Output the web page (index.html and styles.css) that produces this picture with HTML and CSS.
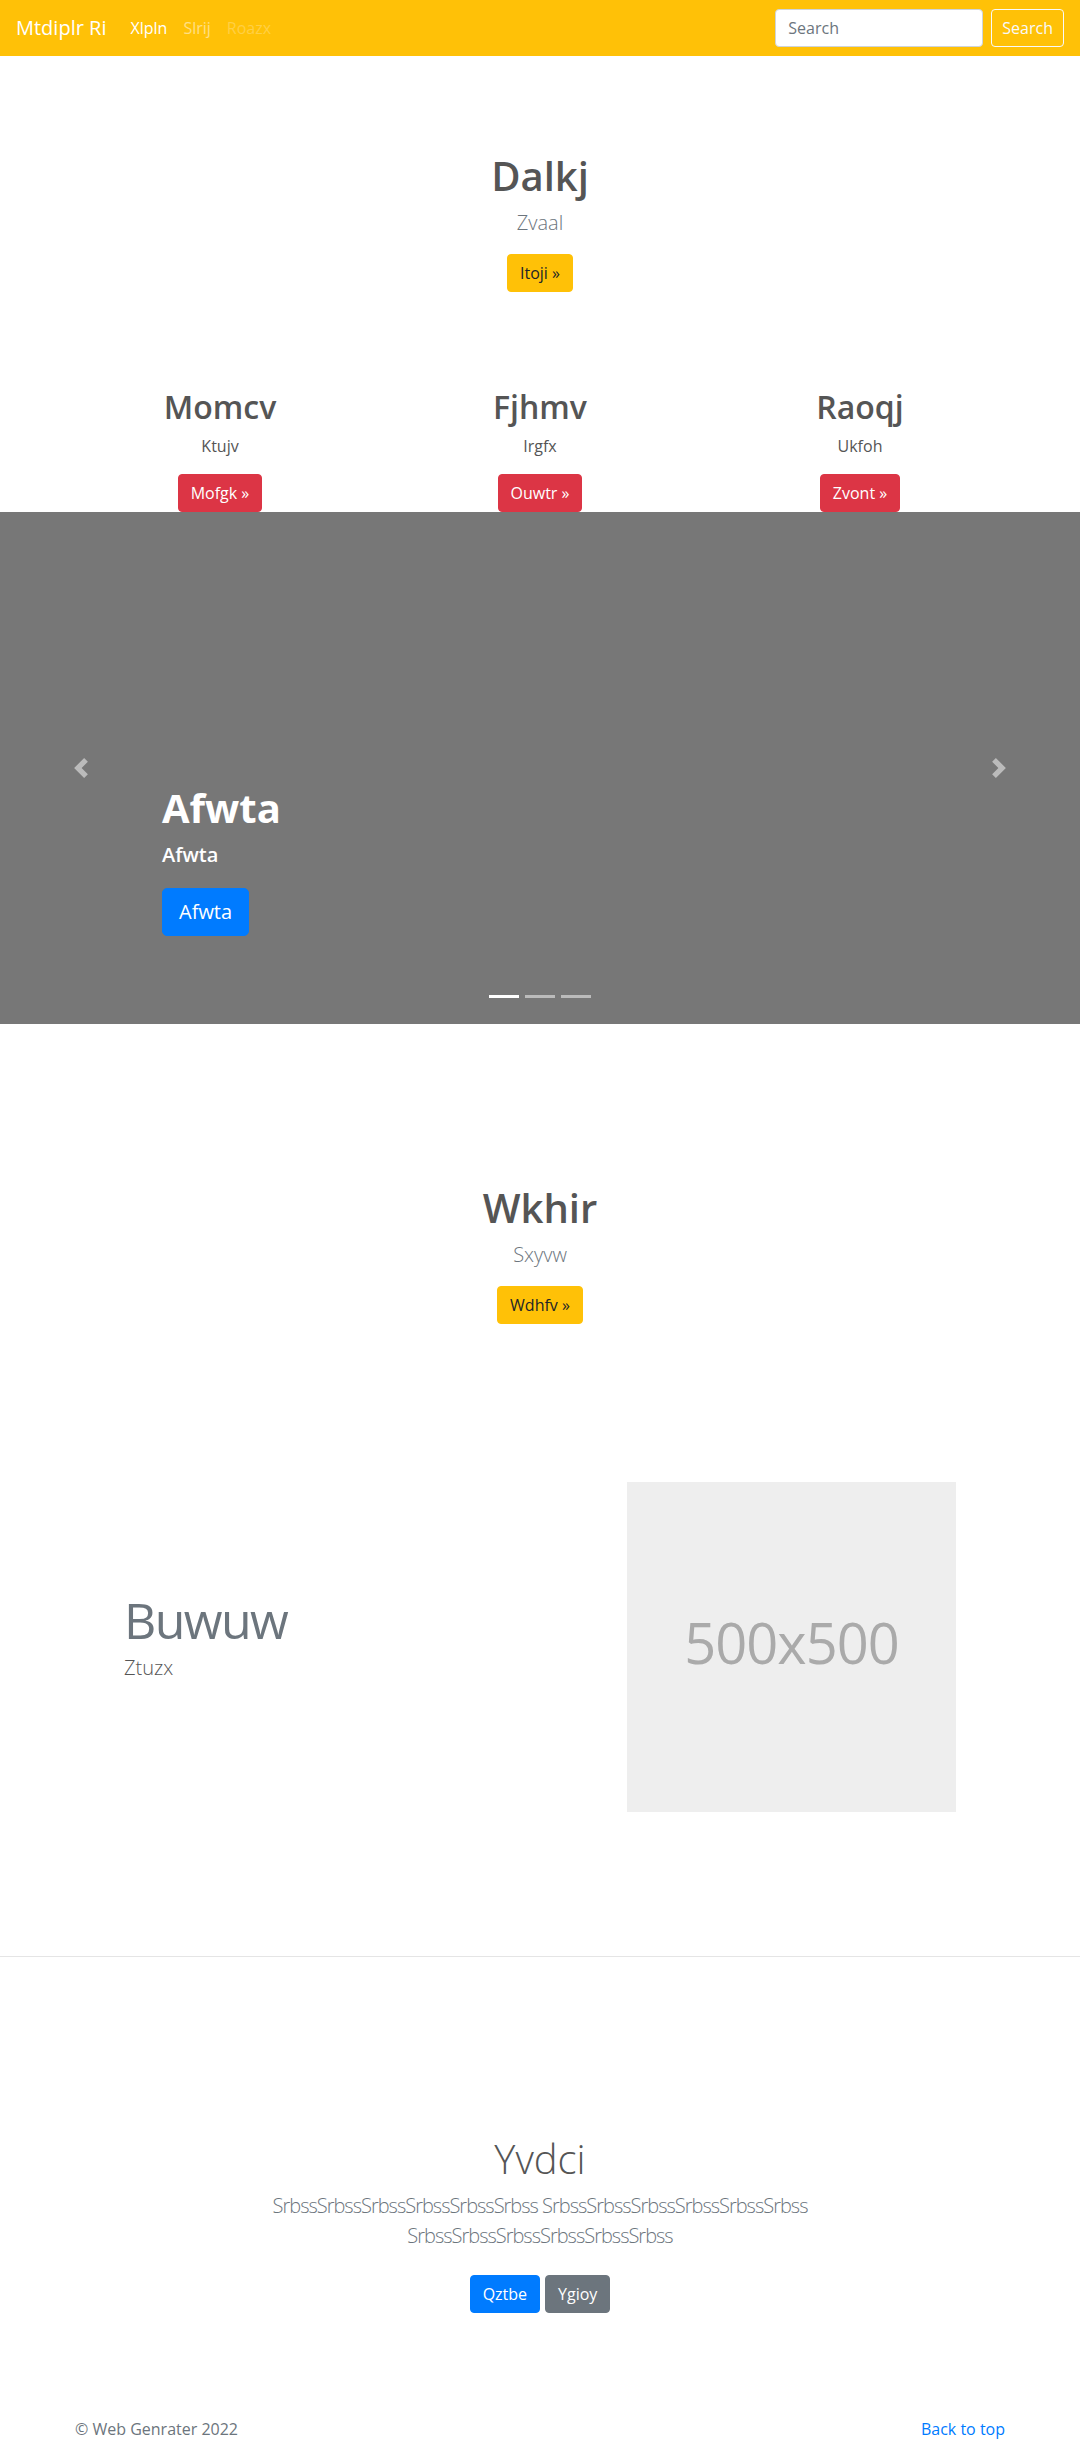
FILE: index.html
```html
<!DOCTYPE html>
<html lang="en">
<head>
<meta charset="utf-8">
<title>Mtdiplr Ri</title>
<link rel="stylesheet" href="styles.css">
</head>
<body>
<header class="navbar">
  <a class="brand" href="#">Mtdiplr Ri</a>
  <ul class="nav">
    <li><a class="nav-link active" href="#">Xlpln</a></li>
    <li><a class="nav-link" href="#">Slrij</a></li>
    <li><a class="nav-link disabled" href="#">Roazx</a></li>
  </ul>
  <form class="search">
    <input class="search-input" type="text" placeholder="Search">
    <button class="btn btn-outline-light" type="button">Search</button>
  </form>
</header>

<main>
  <section class="hero hero-first">
    <h1 class="hero-title">Dalkj</h1>
    <p class="lead muted">Zvaal</p>
    <p class="actions"><a class="btn btn-warning" href="#">Itoji »</a></p>
  </section>

  <section class="columns">
    <div class="col">
      <h2 class="col-title">Momcv</h2>
      <p class="col-text">Ktujv</p>
      <p class="actions"><a class="btn btn-danger" href="#">Mofgk »</a></p>
    </div>
    <div class="col">
      <h2 class="col-title">Fjhmv</h2>
      <p class="col-text">Irgfx</p>
      <p class="actions"><a class="btn btn-danger" href="#">Ouwtr »</a></p>
    </div>
    <div class="col">
      <h2 class="col-title">Raoqj</h2>
      <p class="col-text">Ukfoh</p>
      <p class="actions"><a class="btn btn-danger" href="#">Zvont »</a></p>
    </div>
  </section>

  <div class="carousel">
    <a class="carousel-control prev" href="#">
      <svg class="control-icon" viewBox="0 0 8 8"><path d="M5.25 0l-4 4 4 4 1.5-1.5L4.25 4l2.5-2.5L5.25 0z"/></svg>
    </a>
    <div class="carousel-caption">
      <h1 class="caption-title">Afwta</h1>
      <p class="caption-text">Afwta</p>
      <a class="btn btn-primary btn-lg" href="#">Afwta</a>
    </div>
    <a class="carousel-control next" href="#">
      <svg class="control-icon" viewBox="0 0 8 8"><path d="M2.75 0l-1.5 1.5L3.75 4l-2.5 2.5L2.75 8l4-4-4-4z"/></svg>
    </a>
    <ol class="indicators">
      <li class="active"></li>
      <li></li>
      <li></li>
    </ol>
  </div>

  <section class="hero hero-second">
    <h1 class="hero-title">Wkhir</h1>
    <p class="lead muted">Sxyvw</p>
    <p class="actions"><a class="btn btn-warning" href="#">Wdhfv »</a></p>
  </section>

  <section class="featurette">
    <div class="feat-text">
      <h2 class="feat-heading">Buwuw</h2>
      <p class="lead feat-lead">Ztuzx</p>
    </div>
    <div class="feat-media">
      <svg class="placeholder" role="img" aria-label="500x500">
        <rect width="100%" height="100%" fill="#eee"/>
        <text x="50%" y="50%" dy=".3em" text-anchor="middle" fill="#aaa">500x500</text>
      </svg>
    </div>
  </section>

  <section class="album">
    <div class="album-inner">
      <h1 class="album-title">Yvdci</h1>
      <p class="lead muted album-lead">SrbssSrbssSrbssSrbssSrbssSrbss SrbssSrbssSrbssSrbssSrbssSrbss SrbssSrbssSrbssSrbssSrbssSrbss</p>
      <p class="album-actions">
        <a class="btn btn-primary" href="#">Qztbe</a>
        <a class="btn btn-secondary" href="#">Ygioy</a>
      </p>
    </div>
  </section>
</main>

<footer class="footer">
  <p class="copy">© Web Genrater 2022</p>
  <p class="top-link"><a href="#">Back to top</a></p>
</footer>
</body>
</html>
```
FILE: styles.css
```css
* { box-sizing: border-box; }

html, body {
  margin: 0;
  padding: 0;
}

body {
  font-family: "Open Sans", "Noto Sans", "Liberation Sans", sans-serif;
  font-size: 16px;
  line-height: 1.5;
  color: #555;
  background: #fff;
}

a { text-decoration: none; }

/* navbar */
.navbar {
  display: flex;
  align-items: center;
  height: 56px;
  padding: 8px 16px;
  background: #ffc107;
}
.brand {
  font-size: 20px;
  font-weight: 400;
  line-height: 30px;
  padding: 5px 0;
  margin-right: 16px;
  color: #fff;
}
.nav {
  display: flex;
  list-style: none;
  margin: 0;
  padding: 0;
}
.nav-link {
  display: block;
  padding: 8px;
  line-height: 24px;
  color: rgba(255,255,255,.5);
}
.nav-link.active { color: #fff; }
.nav-link.disabled { color: rgba(255,255,255,.25); }

.search {
  margin-left: auto;
  display: flex;
  align-items: center;
}
.search-input {
  width: 208px;
  height: 38px;
  margin-right: 8px;
  padding: 6px 12px;
  font: inherit;
  font-size: 16px;
  color: #495057;
  background: #fff;
  border: 1px solid #ced4da;
  border-radius: 4px;
}
.search-input::placeholder { color: #6c757d; }

/* buttons */
.btn {
  display: inline-block;
  font-family: inherit;
  font-size: 16px;
  line-height: 24px;
  padding: 6px 12px;
  border: 1px solid transparent;
  border-radius: 4px;
  cursor: pointer;
  vertical-align: middle;
}
.btn-outline-light {
  color: #f8f9fa;
  background: transparent;
  border-color: #f8f9fa;
  padding: 6px 10px;
}
.btn-warning { color: #212529; background: #ffc107; border-color: #ffc107; }
.btn-danger { color: #fff; background: #dc3545; border-color: #dc3545; }
.btn-primary { color: #fff; background: #007bff; border-color: #007bff; }
.btn-secondary { color: #fff; background: #6c757d; border-color: #6c757d; }
.btn-lg {
  font-size: 20px;
  line-height: 30px;
  padding: 8px 16px;
  border-radius: 5px;
}

/* hero */
.hero {
  text-align: center;
}
.hero-first { padding-top: 96px; }
.hero-second { padding-top: 160px; }
.hero-title {
  margin: 0 0 8px;
  font-size: 40px;
  font-weight: 600;
  line-height: 1.2;
  color: #555;
}
.lead {
  font-size: 20px;
  font-weight: 300;
  line-height: 30px;
  margin: 0 0 16px;
}
.muted { color: #6c757d; }
.actions { margin: 0; }
.actions .btn { vertical-align: top; }

/* columns */
.columns {
  display: grid;
  grid-template-columns: repeat(3, 1fr);
  width: 960px;
  margin: 0 auto;
  padding-top: 96px;
  text-align: center;
}
.col { padding: 0 15px; }
.col-title {
  margin: 0 0 8px;
  font-size: 32px;
  font-weight: 600;
  line-height: 1.2;
  color: #555;
}
.col-text { margin: 0 0 16px; }

/* carousel */
.carousel {
  position: relative;
  height: 512px;
  background: #777;
  overflow: hidden;
}
.carousel-control {
  position: absolute;
  top: 0;
  bottom: 0;
  width: 15%;
  display: flex;
  align-items: center;
  justify-content: center;
  opacity: .5;
}
.carousel-control.prev { left: 0; }
.carousel-control.next { right: 0; }
.control-icon {
  width: 20px;
  height: 20px;
  fill: #fff;
}
.carousel-caption {
  position: absolute;
  left: 15%;
  right: 15%;
  bottom: 48px;
  padding: 20px 0 40px;
  color: #fff;
  text-align: left;
  display: flex;
  flex-direction: column;
  align-items: flex-start;
}
.caption-title {
  margin: 0 0 8px;
  font-size: 40px;
  font-weight: 700;
  line-height: 1.2;
}
.caption-text {
  margin: 0 0 18px;
  font-size: 20px;
  font-weight: 600;
  line-height: 30px;
}
.indicators {
  position: absolute;
  left: 15%;
  right: 15%;
  bottom: 0;
  display: flex;
  justify-content: center;
  list-style: none;
  margin: 0 0 16px;
  padding: 0;
}
.indicators li {
  width: 30px;
  height: 23px;
  margin: 0 3px;
  border-top: 10px solid transparent;
  border-bottom: 10px solid transparent;
  background: #fff;
  background-clip: padding-box;
  opacity: .5;
}
.indicators li.active { opacity: 1; }

/* featurette */
.featurette {
  display: flex;
  align-items: center;
  width: 862px;
  margin: 0 auto;
  padding: 158px 0 145px;
  position: relative;
}
.featurette::after {
  content: "";
  position: absolute;
  left: -109px;
  right: -109px;
  bottom: 0;
  border-top: 1px solid rgba(0,0,0,.1);
}
.feat-text {
  flex: 0 0 503px;
  padding: 0 15px;
}
.feat-heading {
  margin: 0 0 8px;
  font-size: 50px;
  font-weight: 400;
  line-height: 1;
  letter-spacing: -1.6px;
  color: #6c757d;
}
.feat-lead { color: #555; }
.feat-media {
  flex: 0 0 359px;
  padding: 0 15px;
}
.placeholder {
  display: block;
  width: 329px;
  height: 330px;
  font-size: 56px;
  letter-spacing: -1px;
}

/* album */
.album {
  padding: 177px 0 48px;
  text-align: center;
  border-top: 1px solid transparent;
}
.album-inner {
  max-width: 640px;
  margin: 0 auto;
  padding: 0 15px;
}
.album-title {
  margin: 0 0 8px;
  font-size: 40px;
  font-weight: 300;
  line-height: 1.2;
  color: #555;
}
.album-lead { letter-spacing: -1px; }
.album-actions {
  display: flex;
  justify-content: center;
  gap: 5px;
  margin: 0;
}
.album-actions .btn { margin: 8px 0; }

/* footer */
.footer {
  display: flex;
  justify-content: space-between;
  width: 930px;
  margin: 0 auto;
  padding: 48px 0;
  color: #6c757d;
}
.footer p { margin: 0 0 4px; }
.top-link a { color: #007bff; }
```
